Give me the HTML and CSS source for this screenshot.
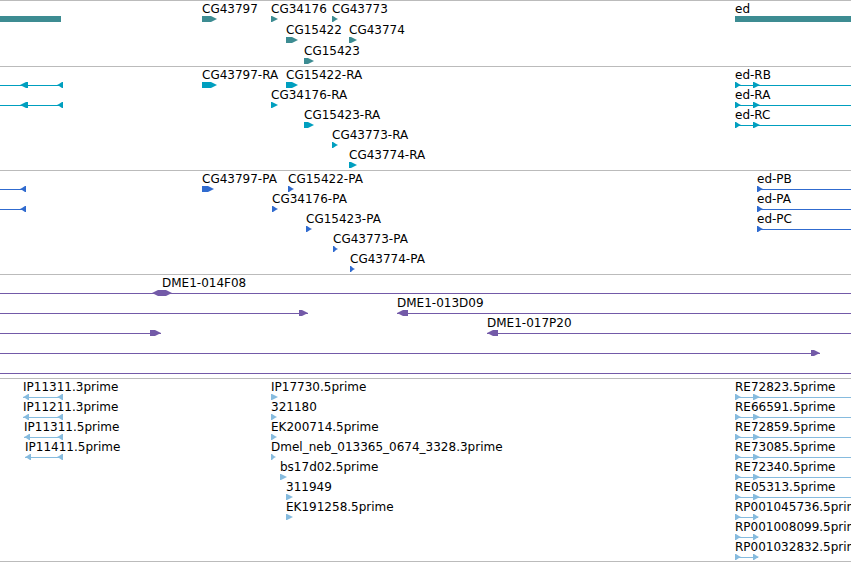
FILE: index.html
```html
<!DOCTYPE html>
<html lang="en">
<head>
  <meta charset="UTF-8" />
  <meta name="viewport" content="width=device-width, initial-scale=1.0"/>
  <title>Genome browser</title>
  <link rel="stylesheet" href="styles.css">
</head>
<body>

  <main id="tracks"></main>

  <script src="tracks.js"></script>

</body>
</html>
```

FILE: styles.css
```css
body {
  font-family: "DejaVu Sans", sans-serif;
  font-size: 12px;
  line-height: 15px;
  background-color: #fff;
  color: #000;
  margin: 0;
}
main {
  overflow: hidden;
  border-bottom: 1px solid #bbb;
}
.track {
  border-top: 1px solid #bbb;
  padding-bottom: 3px;
}
.row {
  position: relative;
  height: 20px;
}
.genes .row {
  height: 21px;
}
.genes,
.ests {
  padding-bottom: 2px;
}

/* features sit at their map coordinate inside the row */
.label,
.line,
.part {
  position: absolute;
}
.label {
  top: 1px;
  white-space: nowrap;
}
.line {
  top: 18px;
  height: 1px;
  background-color: currentColor;
}
.part {
  top: 15px;
  height: 6px;
  background-color: currentColor;
}
.fwd {
  clip-path: polygon(0 0, max(1px, 100% - 6px) 0, calc(100% - 2px) 2px, 100% 50%, calc(100% - 2px) 4px, max(1px, 100% - 6px) 100%, 0 100%);
}
.rev {
  clip-path: polygon(100% 0, min(100% - 1px, 6px) 0, 2px 2px, 0 50%, 2px 4px, min(100% - 1px, 6px) 100%, 100% 100%);
}
.both {
  clip-path: polygon(0 50%, 2px 2px, 6px 0, calc(100% - 6px) 0, calc(100% - 2px) 2px, 100% 50%, calc(100% - 2px) 4px, calc(100% - 6px) 100%, 6px 100%, 2px 4px);
}

.genes .part {
  color: #3d8c92;
}
.transcripts .line,
.transcripts .part {
  color: #009fbf;
}
.proteins .line,
.proteins .part {
  color: #306bcf;
}
.bacs .line,
.bacs .part {
  color: #735aa8;
}
.ests .line,
.ests .part {
  color: #86bbde;
}
```

FILE: tracks.js
```js
// feature: { label, at, line: [start, end], parts: [[start, end, shape], ...] }
// an end of null runs on to the right edge of the view

function arrow(label, start, end) {
  return { label: label, at: start, parts: [[start, end, "fwd"]] };
}

function edTranscript(label) {
  return { label: label, at: 735, line: [735, null], parts: [[735, 741, "fwd"], [753, 760, "fwd"]] };
}

function edProtein(label) {
  return { label: label, at: 757, line: [757, null], parts: [[757, 763, "fwd"]] };
}

function reverseEst(label, start) {
  return { label: label, at: start, line: [start, 63], parts: [[start, start + 6, "rev"], [57, 63, "rev"]] };
}

function shortEst(label) {
  return { label: label, at: 735, line: [735, 758], parts: [[735, 741, "fwd"], [753, 759, "fwd"]] };
}

const leftTranscript = { line: [0, 63], parts: [[20, 28, "rev"], [57, 63, "rev"]] };
const leftProtein = { line: [0, 26], parts: [[20, 26, "rev"]] };

const tracks = [
  { name: "genes", rows: [
    [
      { parts: [[0, 61, "bar"]] },
      arrow("CG43797", 202, 217),
      arrow("CG34176", 271, 278),
      arrow("CG43773", 332, 338),
      { label: "ed", at: 735, parts: [[735, null, "bar"]] }
    ],
    [arrow("CG15422", 286, 298), arrow("CG43774", 349, 357)],
    [arrow("CG15423", 304, 314)]
  ] },
  { name: "transcripts", rows: [
    [leftTranscript, arrow("CG43797-RA", 202, 217), arrow("CG15422-RA", 286, 298), edTranscript("ed-RB")],
    [leftTranscript, arrow("CG34176-RA", 271, 278), edTranscript("ed-RA")],
    [arrow("CG15423-RA", 304, 314), edTranscript("ed-RC")],
    [arrow("CG43773-RA", 332, 338)],
    [arrow("CG43774-RA", 349, 357)]
  ] },
  { name: "proteins", rows: [
    [leftProtein, arrow("CG43797-PA", 202, 214), arrow("CG15422-PA", 288, 294), edProtein("ed-PB")],
    [leftProtein, arrow("CG34176-PA", 272, 278), edProtein("ed-PA")],
    [arrow("CG15423-PA", 306, 312), edProtein("ed-PC")],
    [arrow("CG43773-PA", 333, 338)],
    [arrow("CG43774-PA", 350, 355)]
  ] },
  { name: "bacs", rows: [
    [{ label: "DME1-014F08", at: 162, line: [0, null], parts: [[152, 172, "both"]] }],
    [
      { line: [0, 308], parts: [[299, 308, "fwd"]] },
      { label: "DME1-013D09", at: 397, line: [397, null], parts: [[397, 408, "rev"]] }
    ],
    [
      { line: [0, 161], parts: [[150, 161, "fwd"]] },
      { label: "DME1-017P20", at: 487, line: [487, null], parts: [[487, 498, "rev"]] }
    ],
    [{ line: [0, 820], parts: [[811, 820, "fwd"]] }],
    [{ line: [0, null], parts: [] }]
  ] },
  { name: "ests", rows: [
    [reverseEst("IP11311.3prime", 23), arrow("IP17730.5prime", 271, 278), edTranscript("RE72823.5prime")],
    [reverseEst("IP11211.3prime", 23), arrow("321180", 271, 277), edTranscript("RE66591.5prime")],
    [reverseEst("IP11311.5prime", 24), arrow("EK200714.5prime", 271, 277), edTranscript("RE72859.5prime")],
    [reverseEst("IP11411.5prime", 25), arrow("Dmel_neb_013365_0674_3328.3prime", 271, 276), edTranscript("RE73085.5prime")],
    [arrow("bs17d02.5prime", 280, 287), edTranscript("RE72340.5prime")],
    [arrow("311949", 286, 293), edTranscript("RE05313.5prime")],
    [arrow("EK191258.5prime", 286, 293), shortEst("RP001045736.5prime")],
    [shortEst("RP001008099.5prime")],
    [shortEst("RP001032832.5prime")]
  ] }
];

function addBox(row, className, start, end) {
  const div = document.createElement("div");
  div.className = className;
  div.style.left = start + "px";
  if (end === null) {
    div.style.right = "0";
  } else {
    div.style.width = (end - start) + "px";
  }
  row.appendChild(div);
}

function addFeature(row, feature) {
  if (feature.line) {
    addBox(row, "line", feature.line[0], feature.line[1]);
  }
  feature.parts.forEach(([start, end, shape]) => addBox(row, "part " + shape, start, end));
  if (feature.label) {
    const label = document.createElement("span");
    label.className = "label";
    label.style.left = feature.at + "px";
    label.textContent = feature.label;
    row.appendChild(label);
  }
}

tracks.forEach((track) => {
  const section = document.createElement("section");
  section.className = "track " + track.name;
  track.rows.forEach((features) => {
    const row = document.createElement("div");
    row.className = "row";
    features.forEach((feature) => addFeature(row, feature));
    section.appendChild(row);
  });
  document.getElementById("tracks").appendChild(section);
});
```
